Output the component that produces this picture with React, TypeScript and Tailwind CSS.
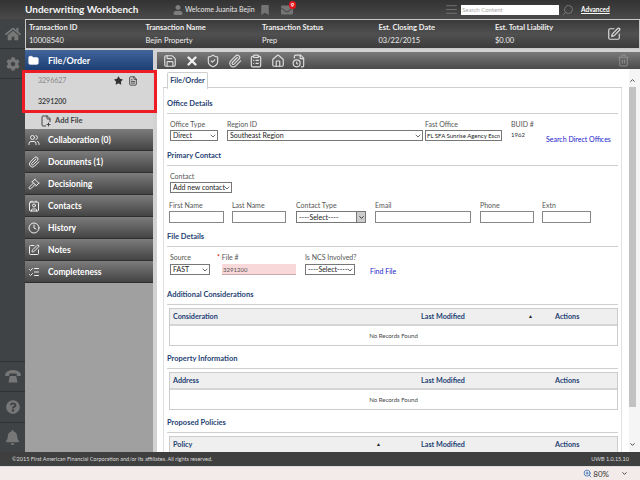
import type { ReactNode } from "react";
import {
  FaBell,
  FaBookmark,
  FaCog,
  FaEnvelope,
  FaHome,
  FaQuestionCircle,
  FaStar,
  FaUser,
} from "react-icons/fa";
import {
  AlignJustify,
  ChevronDown,
  ChevronUp,
  ClipboardList,
  Clock,
  Contact,
  FileClock,
  FilePlus2,
  FileText,
  Folder,
  Gavel,
  Home,
  ListChecks,
  Paperclip,
  Save,
  Search,
  ShieldCheck,
  SquarePen,
  Trash2,
  Users,
  X,
  ZoomIn,
} from "lucide-react";

const NAV = [
  { label: "Collaboration (0)", Icon: Users },
  { label: "Documents (1)", Icon: Paperclip },
  { label: "Decisioning", Icon: Gavel },
  { label: "Contacts", Icon: Contact },
  { label: "History", Icon: Clock },
  { label: "Notes", Icon: SquarePen },
  { label: "Completeness", Icon: ListChecks },
];

const TRANSACTION = [
  { label: "Transaction ID", value: "10008540" },
  { label: "Transaction Name", value: "Bejin Property" },
  { label: "Transaction Status", value: "Prep" },
  { label: "Est. Closing Date", value: "03/22/2015" },
  { label: "Est. Total Liability", value: "$0.00" },
];

function SectionTitle({ children, className }: { children: string; className: string }) {
  return (
    <div className={className}>
      <div className="pt-px text-[7.5px] leading-[10px] font-bold text-[#1f3f74]">{children}</div>
      <div className="mt-[4px] h-px bg-[#cfcfcf]" />
    </div>
  );
}

function Field({ label, width, children }: { label: ReactNode; width: string; children: ReactNode }) {
  return (
    <div className={`flex flex-col ${width}`}>
      <label className="text-[7px] leading-[10px] text-[#555]">{label}</label>
      {children}
    </div>
  );
}

function TextBox({ className }: { className: string }) {
  return <input className={`block h-[12px] border border-[#888] bg-white ${className}`} />;
}

function Dropdown({ value, className }: { value: string; className: string }) {
  return (
    <div className={`relative h-[11px] ${className}`}>
      <select
        defaultValue={value}
        className="block h-full w-full appearance-none border border-[#777] bg-white py-0 pl-[2px] text-[7px] leading-[9px] text-[#222]"
      >
        <option>{value}</option>
      </select>
      <ChevronDown size={8} strokeWidth={2} className="absolute right-[1px] top-[2px] text-[#222]" />
    </div>
  );
}

function RecordsTable({
  first,
  sorted,
  firstSort,
  headerOnly,
}: {
  first: string;
  sorted?: boolean;
  firstSort?: boolean;
  headerOnly?: boolean;
}) {
  return (
    <div className="ml-[2px] border border-[#cccccc]">
      <div className="flex h-[17px] items-center border-b-2 border-[#d5d5d5] bg-[#efefef] pt-px text-[7.2px] font-bold text-[#1f3f74]">
        <div className="w-[206px] pl-[3px]">{first}</div>
        <div className="w-[45px] text-[5px] text-[#222]">{firstSort ? "▲" : ""}</div>
        <div className="w-[107px]">Last Modified</div>
        <div className="w-[27px] text-[5px] text-[#222]">{sorted ? "▲" : ""}</div>
        <div>Actions</div>
      </div>
      {!headerOnly && (
        <div className="flex h-[19px] items-center justify-center text-[6px] text-[#444]">No Records Found</div>
      )}
    </div>
  );
}

export default function App() {
  return (
    <div className="relative flex h-[480px] w-[640px] flex-col overflow-hidden bg-[#d2d2d2] font-['Lato','Noto_Sans',sans-serif]">
      {/* Top bar */}
      <header className="flex h-[19px] shrink-0 items-center bg-linear-to-b from-[#333] to-[#4a4a4a] pl-[25px]">
        <div className="w-[148px] whitespace-nowrap text-[10px] font-bold text-[#f2f2f2]">Underwriting Workbench</div>
        <FaUser className="text-[10px] text-[#7d7d7d]" />
        <div className="ml-[2px] w-[75px] whitespace-nowrap text-[7px] text-[#e8e8e8]">Welcome Juanita Bejin</div>
        <FaBookmark className="text-[10px] text-[#747474]" />
        <div className="relative ml-[11px]">
          <FaEnvelope className="text-[12px] text-[#747474]" />
          <span className="absolute -right-[3px] -top-[3px] flex h-[8px] w-[7px] items-center justify-center rounded-full bg-[#e3141c] text-[6px] font-bold text-white">
            9
          </span>
        </div>
        <AlignJustify className="ml-[152px] text-[#7d7d7d]" size={13} strokeWidth={1.5} />
        <div className="ml-[3px] flex h-[10px] w-[98px] items-center bg-white pl-[1px] text-[6px] text-[#aaa]">Search Content</div>
        <Search className="ml-[3px] -scale-x-100 text-[#777]" size={12} />
        <a className="ml-[7px] text-[6.5px] font-bold text-white underline">Advanced</a>
      </header>

      <div className="flex min-h-0 flex-1">
        {/* Icon rail */}
        <aside className="flex w-[25px] shrink-0 flex-col bg-[#3f4345] text-[#777]">
          <div className="flex h-[30px] items-center justify-center border-b border-[#2f3234]">
            <FaHome className="text-[16px]" />
          </div>
          <div className="flex h-[30px] items-center justify-center border-b border-[#2f3234]">
            <FaCog className="text-[14px]" />
          </div>
          <div className="flex-1" />
          <div className="flex h-[31px] items-center justify-center border-b border-t border-[#2f3234]">
            <svg width="16" height="13" viewBox="0 0 16 13" fill="currentColor">
              <path d="M0 4.5C1 1.5 4 0 8 0s7 1.500 8 4.500l-.5 1.500h-3.500l-.5-2.500H4.500L4 6H.5z" />
              <path d="M3.500 12.500 4.800 6h6.400l1.300 6.500z" />
            </svg>
          </div>
          <div className="flex h-[31px] items-center justify-center border-b border-[#2f3234]">
            <FaQuestionCircle className="text-[14px]" />
          </div>
          <div className="flex h-[29px] items-center justify-center">
            <FaBell className="text-[15px]" />
          </div>
        </aside>

        <div className="flex min-w-0 flex-1 flex-col">
          {/* Transaction summary */}
          <section className="flex h-[30px] shrink-0 border border-[#c8c8c8] bg-linear-to-b from-[#3b3b3b] via-[#505050] to-[#3b3b3b] pl-[3px] text-[7.5px] leading-[10px] text-[#eee]">
            {TRANSACTION.map((t) => (
              <div key={t.label} className="flex w-[116.5px] flex-col gap-[3px] pt-[3px]">
                <div className="font-bold">{t.label}</div>
                <div>{t.value}</div>
              </div>
            ))}
            <SquarePen className="ml-[-5px] mt-[7px] text-[#ddd]" size={14} />
          </section>

          <div className="flex min-h-0 flex-1 pt-px">
            {/* Accordion */}
            <nav className="flex w-[128px] shrink-0 flex-col bg-[#a0a0a0]">
              <div className="flex h-[20px] items-center gap-[9px] bg-linear-to-b from-[#41659b] to-[#1c3f74] pl-[3px] pt-px text-[9px] font-bold text-white">
                <Folder size={11} fill="white" />
                File/Order
              </div>
              <div className="flex h-[21px] items-center justify-between bg-[#d6d6d6] pl-[13px] pr-[15px] text-[7px] text-[#888]">
                3296627
                <div className="flex items-center gap-[5px] text-[#333]">
                  <FaStar className="text-[9px]" />
                  <FileText size={10} />
                </div>
              </div>
              <div className="flex h-[21px] items-center bg-[#d6d6d6] pl-[13px] text-[7px] font-semibold text-[#333]">3291200</div>
              <div className="flex h-[17px] items-center gap-[3px] border-t border-[#bbb] bg-[#d6d6d6] pl-[15px] text-[7.5px] font-bold text-[#444]">
                <FilePlus2 size={12} />
                Add File
              </div>
              {NAV.map(({ label, Icon }) => (
                <div
                  key={label}
                  className="flex h-[22px] items-center gap-[8px] border-b border-[#2e2e2e] bg-linear-to-b from-[#7d7d7d] to-[#444] pl-[3px] pt-px text-[8.5px] font-bold text-white"
                >
                  <Icon size={12} className="shrink-0 text-[#eee]" />
                  {label}
                </div>
              ))}
            </nav>

            <main className="ml-[4px] mt-[2px] flex min-w-0 flex-1 flex-col">
              {/* Toolbar */}
              <div className="flex h-[17px] shrink-0 items-center gap-[7.5px] bg-linear-to-b from-[#7a7a7a] to-[#4b4b4b] pl-[6px] pr-[10px] text-[#ddd]">
                <Save size={14} />
                <X size={14} strokeWidth={4} className="text-[#eee]" />
                <ShieldCheck size={14} />
                <Paperclip size={14} />
                <ClipboardList size={14} />
                <Home size={14} />
                <FileClock size={14} />
                <Trash2 size={13} className="ml-auto text-[#8a8a8a]" />
              </div>

              <div className="flex min-h-0 flex-1 bg-white">
                <div className="min-w-0 flex-1 overflow-hidden pl-[6px] pt-[3px]">
                  {/* Tabs */}
                  <div className="flex h-[16px] w-[459px] border-b border-[#cfcfcf] pl-[4px]">
                    <div className="flex h-[17px] w-[41px] items-center justify-center rounded-t-[2px] border border-b-0 border-[#cfcfcf] bg-white text-[7.4px] font-bold text-[#1f3f74]">
                      File/Order
                    </div>
                  </div>
                  <div className="flow-root h-[400px] w-[459px] border-l border-r border-[#e2e2e2] pl-[3px] pr-[3px]">
                    <SectionTitle className="mt-[10px]">Office Details</SectionTitle>
                    <div className="ml-[3px] mt-[5px] flex">
                      <Field label="Office Type" width="w-[57px]">
                        <Dropdown value="Direct" className="mt-[1px] w-[48px]" />
                      </Field>
                      <Field label="Region ID" width="w-[198px]">
                        <Dropdown value="Southeast Region" className="mt-[1px] w-[196px]" />
                      </Field>
                      <Field label="Fast Office" width="w-[86px]">
                        <input
                          readOnly
                          value="FL SFA Sunrise Agency Escrow"
                          className="mt-[1px] h-[11px] w-[77px] border border-[#777] px-[1px] text-[6px] text-[#222]"
                        />
                      </Field>
                      <Field label="BUID #" width="w-[35px]">
                        <span className="mt-[1px] text-[6px] leading-[9px] text-[#333]">1962</span>
                      </Field>
                      <a className="mt-[15px] whitespace-nowrap text-[7px] leading-[10px] text-[#2222cc]">Search Direct Offices</a>
                    </div>

                    <SectionTitle className="mt-[6px]">Primary Contact</SectionTitle>
                    <div className="ml-[3px] mt-[5px]">
                      <div className="text-[7px] leading-[10px] text-[#555]">Contact</div>
                      <Dropdown value="Add new contact" className="mt-[1px] w-[62px]" />
                    </div>
                    <div className="ml-[2px] mt-[7px] flex">
                      <Field label="First Name" width="w-[63px]">
                        <TextBox className="mt-[1px] w-[55px]" />
                      </Field>
                      <Field label="Last Name" width="w-[64px]">
                        <TextBox className="mt-[1px] w-[54px]" />
                      </Field>
                      <Field label="Contact Type" width="w-[79px]">
                        <div className="mt-[1px] flex h-[12px] w-[70px] items-center justify-between border border-[#777] bg-white pl-[2px] text-[7px] leading-[9px] text-[#222]">
                          ----Select----
                          <span className="flex h-full w-[9px] items-center justify-center border-l border-[#777] bg-[#ccc]">
                            <ChevronDown size={7} strokeWidth={3} />
                          </span>
                        </div>
                      </Field>
                      <Field label="Email" width="w-[105px]">
                        <TextBox className="mt-[1px] w-[96px]" />
                      </Field>
                      <Field label="Phone" width="w-[62px]">
                        <TextBox className="mt-[1px] w-[54px]" />
                      </Field>
                      <Field label="Extn" width="w-[50px]">
                        <TextBox className="mt-[1px] w-[49px]" />
                      </Field>
                    </div>

                    <SectionTitle className="mt-[8px]">File Details</SectionTitle>
                    <div className="ml-[3px] mt-[5px] flex">
                      <Field label="Source" width="w-[47px]">
                        <Dropdown value="FAST" className="mt-[2px] w-[40px]" />
                      </Field>
                      <Field
                        label={
                          <>
                            <span className="text-[#d01010]">*</span> File #
                          </>
                        }
                        width="w-[88px]"
                      >
                        <input
                          readOnly
                          value="3291200"
                          className="ml-[5px] mt-[2px] h-[11px] w-[74px] border-b border-[#c9aaaa] bg-[#f8d8d8] px-[1px] text-[6px] text-[#555]"
                        />
                      </Field>
                      <Field label="Is NCS Involved?" width="w-[65px]">
                        <Dropdown value="----Select----" className="mt-[2px] w-[50px]" />
                      </Field>
                      <a className="mt-[14px] whitespace-nowrap text-[7px] leading-[10px] text-[#2222cc]">Find File</a>
                    </div>

                    <SectionTitle className="mt-[13px]">Additional Considerations</SectionTitle>
                    <div className="mt-[3px]">
                      <RecordsTable first="Consideration" sorted />
                    </div>

                    <SectionTitle className="mt-[7px]">Property Information</SectionTitle>
                    <div className="mt-[3px]">
                      <RecordsTable first="Address" />
                    </div>

                    <SectionTitle className="mt-[7px]">Proposed Policies</SectionTitle>
                    <div className="mt-[3px]">
                      <RecordsTable first="Policy" firstSort headerOnly />
                    </div>
                  </div>
                </div>

                {/* Scrollbar */}
                <div className="flex w-[11px] shrink-0 flex-col bg-[#f5f5f5] text-[#333]">
                  <div className="flex h-[18px] w-[7px] items-end justify-center pb-[3px]">
                    <ChevronUp size={7} strokeWidth={3} />
                  </div>
                  <div className="h-[320px] w-[7px] bg-[#c2c2c2]" />
                  <div className="flex-1" />
                  <div className="flex h-[16px] w-[7px] items-center justify-center">
                    <ChevronDown size={7} strokeWidth={3} />
                  </div>
                </div>
              </div>
            </main>
          </div>
        </div>
      </div>

      {/* Footer */}
      <footer className="flex h-[14px] shrink-0 items-center justify-between bg-[#3f3f3f] pl-[12px] pr-[11px] text-[5.5px] text-[#ddd]">
        <span>©2015 First American Financial Corporation and/or its affiliates. All rights reserved.</span>
        <span>UWB 1.0.15.10</span>
      </footer>
      <div className="flex h-[14px] shrink-0 items-center justify-end border-t border-[#ddd] bg-[#f3eaea] pr-[12px] text-[8px] text-[#333]">
        <ZoomIn size={9} className="mr-[1px] text-[#2a6ab0]" />
        80%
        <ChevronDown size={7} strokeWidth={3} className="ml-[12px]" />
      </div>

      {/* Red highlight annotation */}
      <div className="pointer-events-none absolute left-[22px] top-[70px] h-[43px] w-[135px] border-[3px] border-[#ee1c25]" />
    </div>
  );
}
